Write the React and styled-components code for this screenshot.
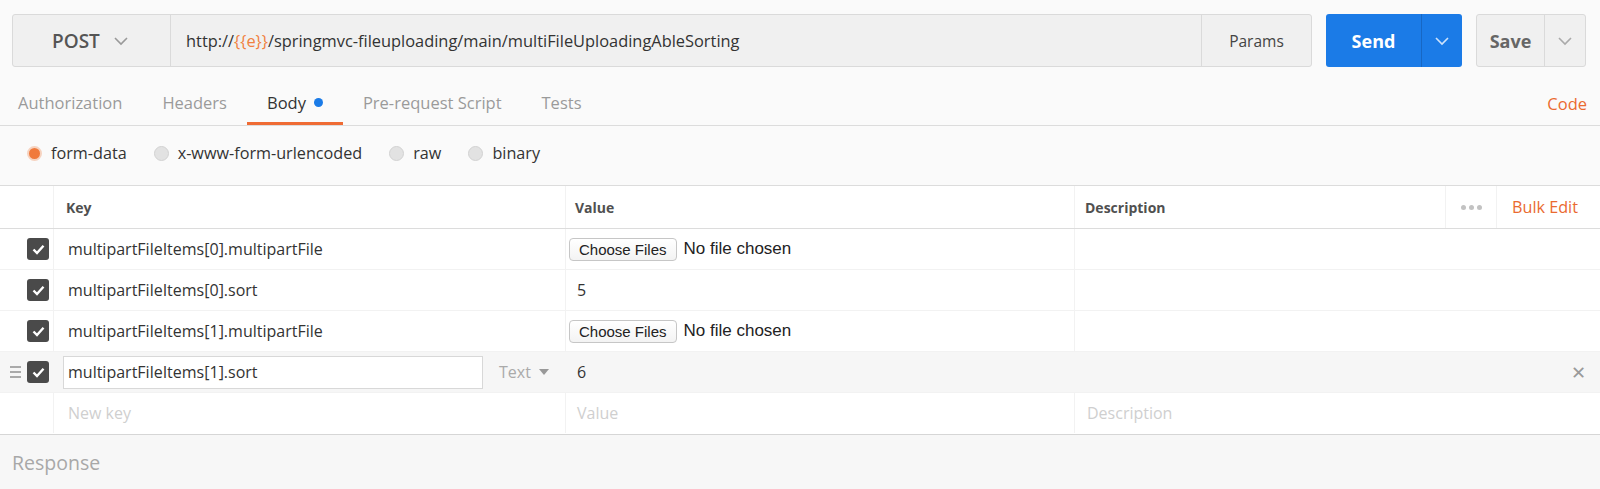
import React from "react";
import styled, { createGlobalStyle } from "styled-components";

const GlobalStyle = createGlobalStyle`
  body {
    margin: 0;
    background: #fafafa;
    font-family: "Open Sans", sans-serif;
    color: #333;
  }
`;

const rows = [
  { key: "multipartFileItems[0].multipartFile", file: true },
  { key: "multipartFileItems[0].sort", value: "5" },
  { key: "multipartFileItems[1].multipartFile", file: true },
  { key: "multipartFileItems[1].sort", value: "6", hover: true },
];

const tabs = ["Authorization", "Headers", "Body", "Pre-request Script", "Tests"];
const bodyTypes = ["form-data", "x-www-form-urlencoded", "raw", "binary"];

const Chevron = ({ color = "#999", size = 16 }) => (
  <svg width={size} height={size} viewBox="0 0 16 16">
    <polyline points="2,5 8,11 14,5" fill="none" stroke={color} strokeWidth="1.6" />
  </svg>
);

const Check = () => (
  <svg width="13" height="11" viewBox="0 0 13 11">
    <polyline points="1.5,5.5 5,9 11.5,1.8" fill="none" stroke="#fff" strokeWidth="2.4" />
  </svg>
);

const App = () => {
  return (
    <>
      <GlobalStyle />
      <Page>
        <TopBar>
          <UrlGroup>
            <Method>
              POST <Chevron />
            </Method>
            <UrlText>
              http://<Var>{"{{e}}"}</Var>/springmvc-fileuploading/main/multiFileUploadingAbleSorting
            </UrlText>
            <Params>Params</Params>
          </UrlGroup>
          <SplitButton $primary>
            <span>Send</span>
            <Caret $primary>
              <Chevron color="#cfe3fb" />
            </Caret>
          </SplitButton>
          <SplitButton>
            <span>Save</span>
            <Caret>
              <Chevron color="#aaa" />
            </Caret>
          </SplitButton>
        </TopBar>

        <TabsRow>
          <Tabs>
            {tabs.map((t) => (
              <Tab key={t} $active={t === "Body"}>
                {t}
                {t === "Body" && <Dot />}
              </Tab>
            ))}
          </Tabs>
          <CodeLink>Code</CodeLink>
        </TabsRow>

        <RadioRow>
          {bodyTypes.map((b, i) => (
            <RadioLabel key={b}>
              <Radio $checked={i === 0} />
              {b}
            </RadioLabel>
          ))}
        </RadioRow>

        <Table>
          <Row $head>
            <Cell />
            <HeadCell $pad={12}>Key</HeadCell>
            <HeadCell $pad={9}>Value</HeadCell>
            <HeadLast>
              <HeadCell $pad={10} $grow>
                Description
              </HeadCell>
              <Dots>
                <i />
                <i />
                <i />
              </Dots>
              <BulkEdit>Bulk Edit</BulkEdit>
            </HeadLast>
          </Row>
          {rows.map((r) => (
            <Row key={r.key} $hover={r.hover}>
              <CheckCell>
                {r.hover && (
                  <Handle>
                    <i />
                    <i />
                    <i />
                  </Handle>
                )}
                <CheckBox>
                  <Check />
                </CheckBox>
              </CheckCell>
              {r.hover ? (
                <Cell $pad={9}>
                  <KeyInput>{r.key}</KeyInput>
                  <TypeSelect>
                    Text <Tri />
                  </TypeSelect>
                </Cell>
              ) : (
                <Cell>{r.key}</Cell>
              )}
              {r.file ? (
                <Cell $pad={3}>
                  <FileButton>Choose Files</FileButton>
                  <FileName>No file chosen</FileName>
                </Cell>
              ) : (
                <Cell $pad={11}>{r.value}</Cell>
              )}
              <Cell $pad={12}>{r.hover && <Close>✕</Close>}</Cell>
            </Row>
          ))}
          <Row $last>
            <Cell />
            <Cell $muted>New key</Cell>
            <Cell $pad={11} $muted>
              Value
            </Cell>
            <Cell $pad={12} $muted>
              Description
            </Cell>
          </Row>
        </Table>

        <Response>Response</Response>
      </Page>
    </>
  );
};

export default App;

const Page = styled.div`
  width: 1600px;
  min-height: 489px;
  background: #fafafa;
`;

const TopBar = styled.div`
  display: flex;
  gap: 14px;
  padding: 14px 14px 0 12px;
`;

const UrlGroup = styled.div`
  flex: 1;
  display: flex;
  height: 53px;
  box-sizing: border-box;
  background: #f0f0f0;
  border: 1px solid #dadada;
  border-radius: 3px;
`;

const Method = styled.div`
  width: 158px;
  display: flex;
  align-items: center;
  gap: 13px;
  padding-left: 39px;
  box-sizing: border-box;
  border-right: 1px solid #dadada;
  font-size: 19px;
  font-weight: 600;
  color: #555;
`;

const UrlText = styled.div`
  flex: 1;
  display: flex;
  align-items: center;
  padding-left: 15px;
  font-size: 16.4px;
  color: #333;
  white-space: pre;
`;

const Var = styled.span`
  color: #f0813f;
`;

const Params = styled.div`
  width: 109px;
  display: flex;
  align-items: center;
  justify-content: center;
  border-left: 1px solid #dadada;
  font-size: 15.5px;
  color: #444;
`;

const SplitButton = styled.div`
  display: flex;
  height: 53px;
  box-sizing: border-box;
  border-radius: 3px;
  font-size: 18px;
  font-weight: 700;
  background: ${(p) => (p.$primary ? "#1b7be7" : "#f0f0f0")};
  color: ${(p) => (p.$primary ? "#fff" : "#666")};
  border: ${(p) => (p.$primary ? "none" : "1px solid #dadada")};
  span {
    width: ${(p) => (p.$primary ? "95px" : "67px")};
    display: flex;
    align-items: center;
    justify-content: center;
  }
`;

const Caret = styled.div`
  width: 40px;
  display: flex;
  align-items: center;
  justify-content: center;
  border-left: 1px solid ${(p) => (p.$primary ? "#1767c4" : "#dadada")};
`;

const TabsRow = styled.div`
  display: flex;
  align-items: flex-end;
  justify-content: space-between;
  height: 59px;
  border-bottom: 1px solid #dcdcdc;
  box-sizing: border-box;
`;

const Tabs = styled.div`
  display: flex;
  margin-left: -2px;
`;

const Tab = styled.div`
  display: flex;
  align-items: center;
  height: 40px;
  padding: 0 20px;
  font-size: 16.5px;
  color: ${(p) => (p.$active ? "#333" : "#9a9a9a")};
  border-bottom: 3px solid ${(p) => (p.$active ? "#ef6b34" : "transparent")};
`;

const Dot = styled.span`
  width: 9px;
  height: 9px;
  border-radius: 50%;
  background: #1b7be7;
  margin-left: 8px;
`;

const CodeLink = styled.div`
  height: 43px;
  display: flex;
  align-items: center;
  padding-right: 13px;
  font-size: 16.5px;
  color: #ea6a30;
`;

const RadioRow = styled.div`
  display: flex;
  align-items: center;
  gap: 27px;
  height: 59px;
  padding: 0 0 5px 27px;
  box-sizing: border-box;
`;

const RadioLabel = styled.label`
  display: flex;
  align-items: center;
  gap: 9px;
  font-size: 16.2px;
  color: #333;
`;

const Radio = styled.span`
  width: 15px;
  height: 15px;
  border-radius: 50%;
  box-sizing: border-box;
  background: ${(p) => (p.$checked ? "#f07a3c" : "#e2e2e2")};
  border: ${(p) => (p.$checked ? "2px solid #f6d3c0" : "1px solid #d2d2d2")};
`;

const Table = styled.div`
  border-top: 1px solid #dcdcdc;
  border-bottom: 1px solid #d6d6d6;
  background: #fff;
`;

const Row = styled.div`
  display: grid;
  grid-template-columns: 53px 512px 509px 1fr;
  height: ${(p) => (p.$head ? 43 : 41)}px;
  background: ${(p) => (p.$hover ? "#f6f6f6" : "#fff")};
  border-bottom: 1px solid ${(p) => (p.$head ? "#dcdcdc" : p.$last ? "transparent" : "#f2f2f2")};
  box-sizing: border-box;
  & > div + div {
    border-left: 1px solid ${(p) => (p.$hover ? "transparent" : "#f2f2f2")};
  }
`;

const Cell = styled.div`
  display: flex;
  align-items: center;
  min-width: 0;
  padding-left: ${(p) => (p.$pad !== undefined ? p.$pad : 14)}px;
  font-size: 16px;
  color: ${(p) => (p.$muted ? "#cfcfcf" : "#333")};
  white-space: nowrap;
`;

const HeadCell = styled.div`
  display: flex;
  align-items: center;
  flex: ${(p) => (p.$grow ? 1 : "none")};
  padding-left: ${(p) => p.$pad}px;
  font-size: 14px;
  font-weight: 700;
  color: #505050;
`;

const HeadLast = styled.div`
  display: flex;
  align-items: stretch;
`;

const Dots = styled.div`
  width: 50px;
  display: flex;
  align-items: center;
  justify-content: center;
  gap: 3px;
  border-left: 1px solid #f2f2f2;
  border-right: 1px solid #f2f2f2;
  i {
    width: 5px;
    height: 5px;
    border-radius: 50%;
    background: #c2c2c2;
  }
`;

const BulkEdit = styled.div`
  width: 103px;
  display: flex;
  align-items: center;
  padding-left: 15px;
  box-sizing: border-box;
  font-size: 16.2px;
  color: #ea6a30;
`;

const CheckCell = styled.div`
  display: flex;
  align-items: center;
  justify-content: flex-end;
  gap: 6px;
  padding-right: 4px;
`;

const Handle = styled.div`
  display: flex;
  flex-direction: column;
  gap: 3px;
  i {
    width: 11px;
    height: 2px;
    background: #aaa;
  }
`;

const CheckBox = styled.div`
  width: 22px;
  height: 22px;
  border-radius: 3px;
  background: #4a4a4a;
  display: flex;
  align-items: center;
  justify-content: center;
`;

const KeyInput = styled.div`
  width: 420px;
  height: 33px;
  box-sizing: border-box;
  border: 1px solid #d8d8d8;
  background: #fff;
  display: flex;
  align-items: center;
  padding-left: 4px;
`;

const TypeSelect = styled.div`
  display: flex;
  align-items: center;
  gap: 8px;
  margin-left: 16px;
  color: #aaa;
`;

const Tri = styled.span`
  width: 0;
  height: 0;
  border-left: 5px solid transparent;
  border-right: 5px solid transparent;
  border-top: 6px solid #999;
`;

const FileButton = styled.div`
  height: 21px;
  padding: 0 9px;
  display: flex;
  align-items: center;
  border: 1px solid #c6c6c6;
  border-radius: 4px;
  background: linear-gradient(#fff, #f3f3f3);
  font-family: "Liberation Sans", Arial, sans-serif;
  font-size: 15px;
  color: #222;
`;

const FileName = styled.span`
  margin-left: 7px;
  font-family: "Liberation Sans", Arial, sans-serif;
  font-size: 17px;
  color: #222;
`;

const Close = styled.span`
  margin-left: auto;
  margin-right: 14px;
  font-size: 18px;
  color: #9a9a9a;
`;

const Response = styled.div`
  height: 54px;
  display: flex;
  align-items: center;
  padding-left: 12px;
  background: #f7f7f7;
  font-size: 19.5px;
  color: #a8a8a8;
`;
